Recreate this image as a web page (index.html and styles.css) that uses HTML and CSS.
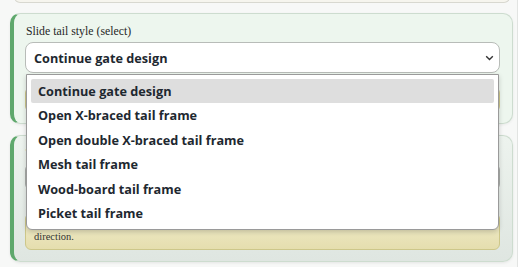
FILE: index.html
```html
<!DOCTYPE html>
<html lang="en">
<head>
    <meta charset="UTF-8">
    <meta name="viewport" content="width=device-width, initial-scale=1.0">
    <title>Slide Gate Builder</title>
    <link rel="stylesheet" href="styles.css">
</head>
<body>
    <div class="page">
        <!-- previous question, scrolled off the top -->
        <div class="card card-prev"></div>

        <!-- Slide tail style -->
        <div class="card card-active">
            <label class="field-label">Slide tail style (select)</label>
            <div class="select-wrap">
                <div class="select">
                    <span>Continue gate design</span>
                    <svg class="chevron" width="9" height="6" viewBox="0 0 9 6">
                        <path d="M1.2 1.2 L4.5 4.5 L7.8 1.2" fill="none" stroke="#333" stroke-width="1.4"/>
                    </svg>
                </div>
                <ul class="dropdown">
                    <li class="selected">Continue gate design</li>
                    <li>Open X-braced tail frame</li>
                    <li>Open double X-braced tail frame</li>
                    <li>Mesh tail frame</li>
                    <li>Wood-board tail frame</li>
                    <li>Picket tail frame</li>
                </ul>
            </div>
            <div class="note">Choose how the tail section behind the gate is built.</div>
        </div>

        <!-- Next question -->
        <div class="card card-next">
            <label class="field-label">Tail length (mm)</label>
            <input class="text-input" type="text" value="">
            <div class="note">The tail counterbalances the gate and has to extend past the opening in the closing<br>direction.</div>
        </div>
    </div>
</body>
</html>
```

FILE: styles.css
```css
body {
    margin: 0;
    padding: 0;
    background-color: #fff;
    font-family: "Liberation Serif", serif;
}

.page {
    width: 518px;
    height: 267px;
    background-color: #f7f8f7;
    border-right: 1px solid #e2e4e2;
    overflow: hidden;
    padding: 0 0 0 10px;
    box-sizing: border-box;
}

.card {
    width: 503px;
    box-sizing: border-box;
    border: 1px solid #cddccf;
    border-left: 4px solid #5ea86c;
    border-radius: 10px;
    padding: 10px 12px 11px 11px;
    display: flex;
    flex-direction: column;
}

.card-prev {
    height: 6px;
    margin: -3px 0 0 4px;
    width: 496px;
    padding: 0;
    border: 1px solid #d8d8d0;
    background-color: #f6f5ee;
    border-radius: 0 0 10px 10px;
}

.card-active {
    margin-top: 10px;
    height: 111px;
    background-color: #edf6ee;
    box-shadow: 0 1px 3px rgba(0, 0, 0, 0.06);
}

.card-next {
    margin-top: 11px;
    height: 127px;
    background: linear-gradient(#edf3ee, #dfe6e1);
    box-shadow: 0 1px 3px rgba(0, 0, 0, 0.08);
}

.field-label {
    display: block;
    font-size: 11.8px;
    color: #262626;
    line-height: 14px;
    margin: 0 0 4px 1px;
}

.select-wrap {
    position: relative;
}

.select {
    height: 31px;
    box-sizing: border-box;
    border: 1px solid #b8bcb8;
    border-radius: 8px;
    background-color: #fff;
    display: flex;
    align-items: center;
    justify-content: space-between;
    padding: 0 5px 0 8px;
    font-family: "Open Sans", sans-serif;
    font-weight: bold;
    font-size: 12.7px;
    color: #1e2830;
}

.dropdown {
    position: absolute;
    top: 32px;
    left: 1px;
    right: 1px;
    z-index: 5;
    list-style: none;
    margin: 0;
    padding: 4px;
    background-color: #fff;
    border: 1px solid #9a9a9a;
    border-radius: 0 0 6px 6px;
    box-shadow: 0 2px 5px rgba(0, 0, 0, 0.18);
}

.dropdown li {
    height: 24.4px;
    line-height: 24px;
    padding-left: 7px;
    font-family: "Open Sans", sans-serif;
    font-weight: bold;
    font-size: 12.7px;
    color: #1e2830;
    border-radius: 2px;
}

.dropdown li.selected {
    background-color: #dedede;
}

.text-input {
    display: block;
    width: 100%;
    height: 26px;
    box-sizing: border-box;
    border: 1px solid #a8aca8;
    border-radius: 6px;
}

.note {
    margin-top: auto;
    padding: 5px 8px 6px 8px;
    font-size: 10.5px;
    line-height: 12px;
    color: #333;
    border: 1px solid #cdc78a;
    border-radius: 6px;
    background: linear-gradient(#f1edcd, #e5deae);
}
```
